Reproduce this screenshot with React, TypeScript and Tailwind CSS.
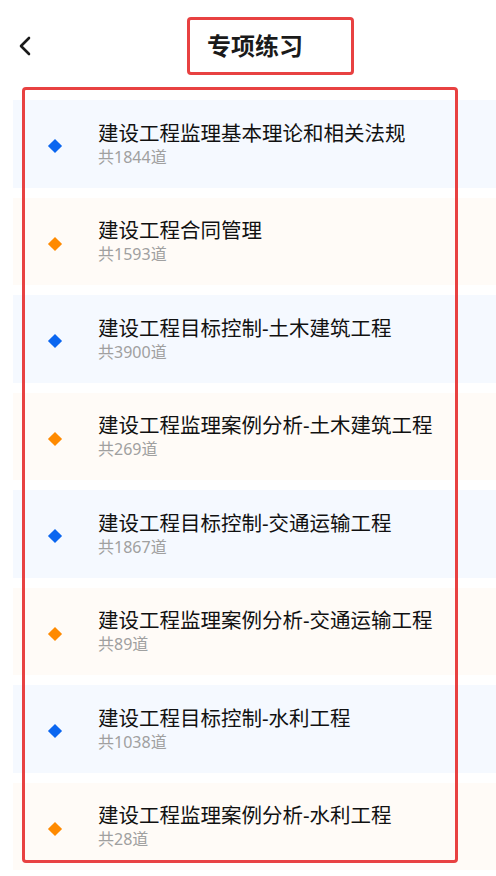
import React, { JSX } from 'react';

type Topic = { title: string; count: number };

const topics: Topic[] = [
    { title: '建设工程监理基本理论和相关法规', count: 1844 },
    { title: '建设工程合同管理', count: 1593 },
    { title: '建设工程目标控制-土木建筑工程', count: 3900 },
    { title: '建设工程监理案例分析-土木建筑工程', count: 269 },
    { title: '建设工程目标控制-交通运输工程', count: 1867 },
    { title: '建设工程监理案例分析-交通运输工程', count: 89 },
    { title: '建设工程目标控制-水利工程', count: 1038 },
    { title: '建设工程监理案例分析-水利工程', count: 28 },
];

const TopicRow = ({ item, index }: { item: Topic; index: number }): JSX.Element => {
    const blue = index % 2 === 0;
    return (
        <div className={`flex items-center h-[87.5px] ${blue ? 'bg-[#f5f9ff]' : 'bg-[#fffbf7]'}`}>
            {/* diamond marker */}
            <div className="ml-[35px] w-[14px] h-[14px] flex items-center justify-center mt-[5px]">
                <div className={`w-[10px] h-[10px] rotate-45 ${blue ? 'bg-[#0a66f0]' : 'bg-[#ff8a00]'}`} />
            </div>
            <div className="ml-[36px] flex flex-col">
                <div className="text-[20.5px] leading-[26px] text-[#111111]">{item.title}</div>
                <div className="text-[16px] leading-[22px] text-[#a0a0a0]">共{item.count}道</div>
            </div>
        </div>
    );
};

const App = (): JSX.Element => {
    return (
        <div
            className="w-[496px] h-[876px] bg-white overflow-hidden"
            style={{ fontFamily: '"Noto Sans", "Noto Sans CJK SC", sans-serif' }}
        >
            {/* header */}
            <header className="flex items-center pt-[17px] pl-[18px]">
                <svg width="13" height="20" viewBox="0 0 13 20" fill="none">
                    <path d="M11 2 L3 10 L11 18" stroke="#1a1a1a" strokeWidth="2.6" strokeLinecap="round" strokeLinejoin="round" />
                </svg>
                <div className="ml-[156px] w-[167px] h-[58px] border-[3px] border-[#e84141] rounded-[4px] flex items-center pl-[17px]">
                    <span className="text-[24px] font-bold leading-none text-[#1a1a1a]">专项练习</span>
                </div>
            </header>

            {/* list */}
            <div className="relative mt-[25px] pl-[13px] flex flex-col gap-[10px]">
                {topics.map((t, i) => (
                    <TopicRow key={t.title} item={t} index={i} />
                ))}
                <div className="absolute left-[22px] top-[-13px] w-[436px] bottom-[7px] border-[3px] border-[#e84141] rounded-[4px] pointer-events-none" />
            </div>
        </div>
    );
};

export default App;
